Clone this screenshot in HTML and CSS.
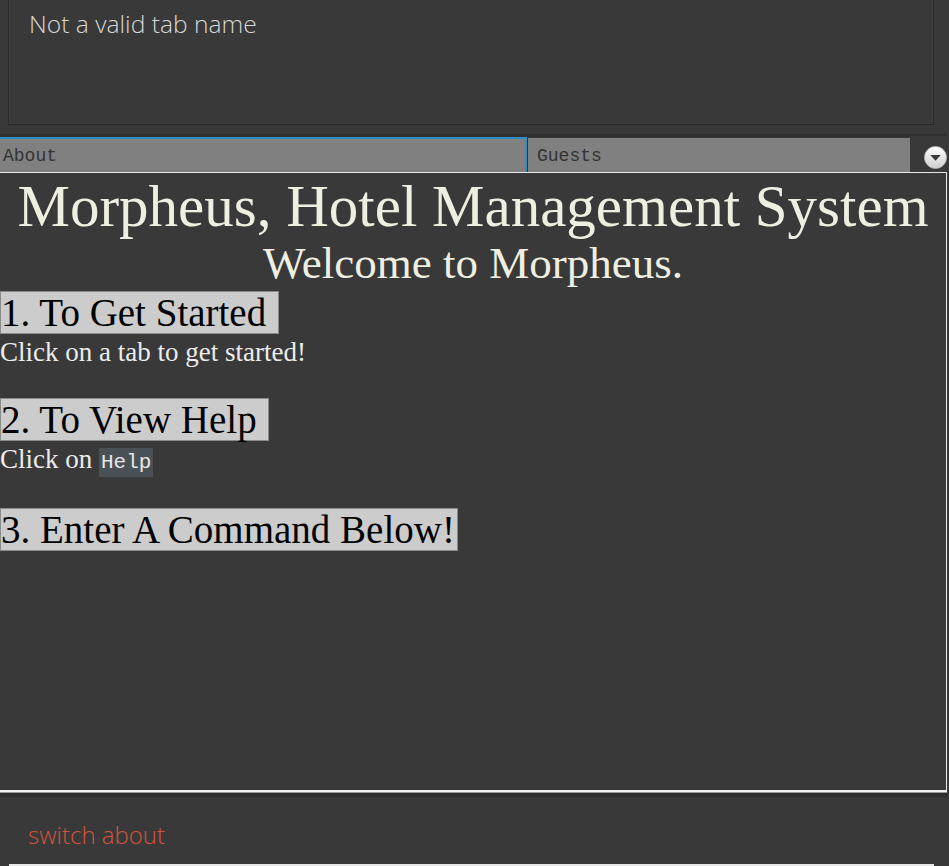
FILE: index.html
```html
<!DOCTYPE html>
<html>
<head>
<meta charset="utf-8">
<link rel="stylesheet" href="styles.css">
</head>
<body>
<div class="app">
  <div class="result-area">
    <div class="result-box">Not a valid tab name</div>
  </div>
  <div class="tab-header">
    <div class="tab tab-selected">About</div>
    <div class="tab tab-guests">Guests</div>
    <div class="tab-menu">
      <svg width="23" height="23" viewBox="0 0 24 24">
        <defs>
          <linearGradient id="g" x1="0" y1="0" x2="0" y2="1">
            <stop offset="0" stop-color="#ffffff"/>
            <stop offset="1" stop-color="#cfcfcf"/>
          </linearGradient>
        </defs>
        <circle cx="12" cy="12" r="11.5" fill="url(#g)" stroke="#b8b8b8" stroke-width="0.8"/>
        <path d="M6.5 9.5 L17.5 9.5 L12 15.5 Z" fill="#3a3a3a"/>
      </svg>
    </div>
  </div>
  <div class="content">
    <h1 class="title">Morpheus, Hotel Management System</h1>
    <h2 class="subtitle">Welcome to Morpheus.</h2>
    <div class="step"><span class="step-label">1. To Get Started&nbsp;</span></div>
    <p class="step-text">Click on a tab to get started!</p>
    <div class="step"><span class="step-label">2. To View Help&nbsp;</span></div>
    <p class="step-text">Click on <code class="code">Help</code></p>
    <div class="step"><span class="step-label">3. Enter A Command Below!</span></div>
  </div>
  <div class="command-area">
    <div class="command-text">switch about</div>
    <div class="command-box"></div>
  </div>
</div>
</body>
</html>
```

FILE: styles.css
```css
html, body {
  margin: 0;
  padding: 0;
  background: #393939;
  overflow: hidden;
}

.app {
  width: 949px;
  height: 866px;
  display: flex;
  flex-direction: column;
  background: #393939;
}

.result-area {
  flex: 0 0 134px;
  padding: 0 15px 0 8px;
  box-sizing: border-box;
}

.result-box {
  height: 127px;
  margin-top: -2px;
  border: 1px solid #2a2a2a;
  box-shadow: inset 0 0 0 1px #3e3e3e;
  box-sizing: border-box;
  padding: 8px 0 0 20px;
  font-family: "Open Sans", "Lato", sans-serif;
  font-weight: 300;
  font-size: 24.6px;
  color: #d6d6d6;
}

.tab-header {
  flex: 0 0 39px;
  background: #2f2f2f;
  display: flex;
  align-items: flex-end;
  border-bottom: 1px solid #e8e8e8;
  box-sizing: border-box;
  margin-right: 2px;
}

.tab {
  height: 35px;
  background: #808080;
  font-family: "Liberation Mono", monospace;
  font-size: 18px;
  color: #333333;
  display: flex;
  align-items: center;
  padding-left: 3px;
  box-sizing: border-box;
}

.tab-selected {
  width: 527px;
  border-top: 2px solid #2a8fc4;
  border-right: 2px solid #2a8fc4;
  padding-top: 1px;
}

.tab-guests {
  width: 382px;
  margin-left: 1px;
  padding-left: 9px;
  padding-top: 2px;
  border-top: 1px solid #3a3a3a;
}

.tab-menu {
  flex: 1;
  height: 36px;
  background: #393939;
  display: flex;
  align-items: flex-end;
  justify-content: flex-end;
  padding-bottom: 3px;
  box-sizing: border-box;
}

.tab-menu svg {
  display: block;
}

.content {
  flex: 0 0 619px;
  border-right: 1px solid #e8e8e8;
  border-bottom: 2px solid #f2f2f2;
  box-shadow: 0 1px 0 #9a9a9a, 0 5px 0 #2e2e2e;
  margin-right: 2px;
  box-sizing: border-box;
  overflow: hidden;
  font-family: "Liberation Serif", serif;
}

.title {
  margin: 5px 0 0 0;
  text-align: center;
  font-family: "Liberation Serif", serif;
  font-weight: normal;
  font-size: 59px;
  line-height: 56px;
  color: #efefe1;
  white-space: nowrap;
}

.subtitle {
  margin: 4px 0 0 0;
  text-align: center;
  font-family: "Liberation Serif", serif;
  font-weight: normal;
  font-size: 45px;
  line-height: 50px;
  color: #efefe1;
}

.step {
  margin-top: 3px;
  line-height: 0;
}

.step-label {
  display: inline-block;
  background: #cccccc;
  border: 1px solid #8a8a8a;
  color: #000000;
  font-family: "Liberation Serif", serif;
  font-size: 39px;
  line-height: 41px;
  padding: 0 2px 0 0;
}

.step-text {
  margin: 3px 0 31px 0;
  font-family: "Liberation Serif", serif;
  font-size: 27px;
  line-height: 30px;
  color: #ececec;
}

.code {
  display: inline-block;
  font-family: "Liberation Mono", monospace;
  font-size: 21px;
  line-height: 29px;
  background: #4a5156;
  color: #e6e6e6;
  padding: 0 2px;
}

.command-area {
  flex: 1 1 auto;
  display: flex;
  flex-direction: column;
  padding: 0 15px 0 9px;
  overflow: hidden;
}

.command-text {
  margin-top: 27px;
  padding-left: 19px;
  font-family: "Open Sans", "Lato", sans-serif;
  font-weight: 300;
  font-size: 24px;
  line-height: 32px;
  color: #d2553c;
}

.command-box {
  margin-top: 13px;
  height: 10px;
  flex-shrink: 0;
  border-top: 2px solid #e8e8e8;
  background: #393939;
}
```
